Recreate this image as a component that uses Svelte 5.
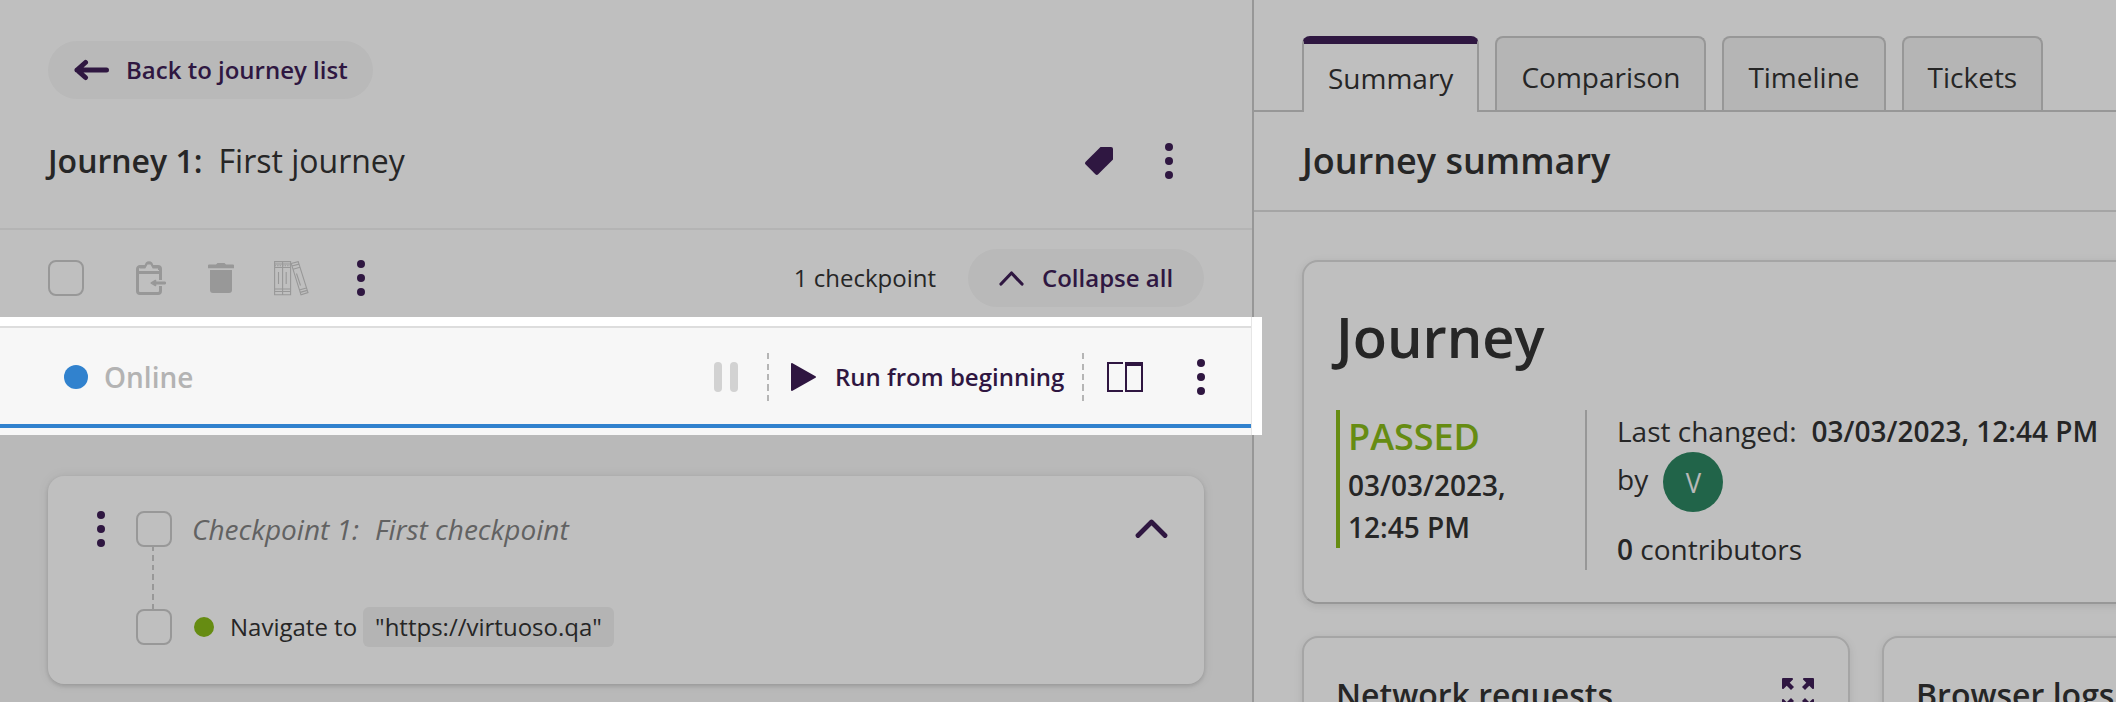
<script>
  const tabs = ['Summary', 'Comparison', 'Timeline', 'Tickets'];
  let active = $state('Summary');
</script>

{#snippet dots()}
  <svg class="dots" width="8" height="36" viewBox="0 0 8 36" fill="currentColor">
    <circle cx="4" cy="4" r="4" /><circle cx="4" cy="18" r="4" /><circle cx="4" cy="32" r="4" />
  </svg>
{/snippet}

<div class="page">
  <section class="left">
    <header class="head">
      <button class="pill back">
        <svg width="36" height="22" viewBox="0 0 36 22" fill="none" stroke="currentColor" stroke-width="5" stroke-linecap="round" stroke-linejoin="round">
          <path d="M12.500 3.500 4 11l8.500 7.500M4 11h29.500" />
        </svg>
        <span>Back to journey list</span>
      </button>
      <div class="title">
        <strong>Journey 1:</strong><span class="name">First journey</span>
        <svg class="tag" width="28" height="28" viewBox="0 0 28 28" fill="currentColor">
          <path d="M15.500 0H26a2 2 0 0 1 2 2v10.500L13.200 27.300a2 2 0 0 1-2.800 0L.7 17.600a2 2 0 0 1 0-2.800z" />
        </svg>
        {@render dots()}
      </div>
    </header>

    <div class="tools">
      <i class="check"></i>
      <svg class="clip" width="30" height="34" viewBox="0 0 30 34">
        <path d="M24.500 19V8A2.500 2.500 0 0 0 22 5.500H4A2.500 2.500 0 0 0 1.500 8v22A2.500 2.500 0 0 0 4 32.500h18a2.500 2.500 0 0 0 2.500-2.500v-5" fill="none" stroke="currentColor" stroke-width="3" />
        <path d="M2 11.500h22.500" stroke="currentColor" stroke-width="3" />
        <path d="M4 9V5.500h4.500C8.700 2 10.500.3 13 .3S17.300 2 17.500 5.500H23V9z" fill="currentColor" />
        <path d="M4 9.700V7.500h5.300l2.200-4h3l2.200 4h5.300v2.200z" fill="#fff" />
        <path d="M28.700 22H19" stroke="currentColor" stroke-width="2.800" stroke-linecap="round" />
        <path d="M19.500 19.500 15.300 22l4.200 2.500z" fill="currentColor" stroke="currentColor" stroke-width="1.600" stroke-linejoin="round" />
      </svg>
      <svg class="trash" width="26" height="30" viewBox="0 0 26 30" fill="currentColor">
        <path d="M1 1.500H8L9.500 0h7L18 1.500h7a1 1 0 0 1 1 1V5.300H0V2.500a1 1 0 0 1 1-1zM2 7h22v20a3 3 0 0 1-3 3H5a3 3 0 0 1-3-3z" />
      </svg>
      <svg class="books" width="35" height="35" viewBox="0 0 35 35" fill="none" stroke="currentColor" stroke-width="1.100">
        <path d="M.6.600h8v33.200h-8zM8.600.600h8v33.200h-8zM.6 3h16M.6 6.500h16M.6 28h16M.6 30.500h16M4.500 11v12M12.200 11v12" />
        <path d="M.6 4.800h16" stroke-dasharray="1.500 1" />
        <path d="m17.200 2.500 7-1.900 9.800 31-7 2.200zM17.900 5l7.100-1.900M19 8.200l7-2M25.300 29l7-2M26.200 31.400l7-2M22.500 12.500l4 12" />
      </svg>
      <span class="ink">{@render dots()}</span>
      <span class="count">1 checkpoint</span>
      <button class="pill collapse">
        <svg width="25" height="15" viewBox="0 0 25 15" fill="none" stroke="currentColor" stroke-width="3.200" stroke-linecap="round" stroke-linejoin="round"><path d="M2 13 12.500 2 23 13" /></svg>
        <span>Collapse all</span>
      </button>
    </div>

    <div class="debug">
      <i class="online"></i><span class="state">Online</span>
      <svg class="pause" width="24" height="30" viewBox="0 0 24 30" fill="currentColor"><rect width="8" height="30" rx="4" /><rect x="16" width="8" height="30" rx="4" /></svg>
      <i class="dash d1"></i>
      <svg class="play" width="25" height="28" viewBox="0 0 25 28" fill="currentColor" stroke="currentColor" stroke-width="2" stroke-linejoin="round"><path d="M1 1v26L24 14z" /></svg>
      <span class="run">Run from beginning</span>
      <i class="dash d2"></i>
      <svg class="cols" width="36" height="30" viewBox="0 0 36 30" fill="none" stroke="currentColor" stroke-width="2"><path d="M16 1H1v28h15M19 2h16v27H19z" /><path d="M18 2h18" stroke-width="4" /></svg>
      {@render dots()}
    </div>

    <div class="list">
      <article class="checkpoint">
        <div class="crow">
          {@render dots()}
          <i class="check"></i>
          <em>Checkpoint 1:</em><em class="cname">First checkpoint</em>
          <svg class="chev" width="33" height="20" viewBox="0 0 33 20" fill="none" stroke="currentColor" stroke-width="4.800" stroke-linecap="round" stroke-linejoin="round"><path d="M3 16.500 16.500 3 30 16.500" /></svg>
        </div>
        <i class="link"></i>
        <div class="step">
          <i class="check"></i><i class="ok"></i><span class="nav">Navigate to</span><code>"https://virtuoso.qa"</code>
        </div>
      </article>
    </div>
  </section>

  <section class="right">
    <nav>
      {#each tabs as tab}
        <button class="tab" class:active={tab === active} onclick={() => (active = tab)}>{tab}</button>
      {/each}
    </nav>
    <h2>Journey summary</h2>
    <div class="cards">
      <article class="card main">
        <h1>Journey</h1>
        <div class="info">
          <div class="result"><b class="passed">PASSED</b><b>03/03/2023,</b><b>12:45 PM</b></div>
          <div class="meta">
            <div class="line">Last changed:<b class="when">03/03/2023, 12:44 PM</b></div>
            <div class="by">by<span class="avatar"><span>V</span></span></div>
            <div class="line"><b>0</b>&nbsp;contributors</div>
          </div>
        </div>
      </article>
      <div class="pair">
        <article class="card small">
          <h3>Network requests</h3>
          <svg width="32" height="32" viewBox="0 0 32 32" fill="currentColor" stroke="currentColor" stroke-linejoin="round">
            <g id="corner"><path d="M1 1h9L1 10z" stroke-width="2" /><path d="m4 4 6.500 6.500" stroke-width="4.200" /></g>
            <use href="#corner" transform="matrix(-1 0 0 1 32 0)" />
            <use href="#corner" transform="matrix(1 0 0 -1 0 32)" />
            <use href="#corner" transform="matrix(-1 0 0 -1 32 32)" />
          </svg>
        </article>
        <article class="card small"><h3>Browser logs</h3></article>
      </div>
    </div>
  </section>
  <div class="spotlight"></div>
</div>

<style>
  :global(body) { overflow: hidden; }
  .page { position: relative; display: flex; width: 2116px; height: 702px; overflow: hidden; background: #fff; color: #333; font: 400 28px/42px "Open Sans", sans-serif; white-space: nowrap; }
  .page * { box-sizing: border-box; }
  svg, i { display: block; flex: none; }
  button { font: inherit; color: inherit; padding: 0; border: 0; background: none; }
  strong, b { font-weight: 600; }
  .left { width: 1254px; flex: none; display: flex; flex-direction: column; border-right: 2px solid #cacaca; }
  .head, .tools, .debug { flex: none; }
  .head { height: 230px; padding: 41px 79px 0 48px; border-bottom: 2px solid #f1f1f1; }
  .pill { display: flex; align-items: center; height: 58px; border-radius: 29px; background: #f7f7f7; color: #3f1f57; font-size: 24px; font-weight: 600; }
  .back { width: 325px; padding-left: 25px; gap: 17px; }
  .title { display: flex; align-items: center; height: 64px; margin-top: 30px; font-size: 32px; }
  .name { margin-left: 16px; }
  .title .tag { margin-left: auto; margin-right: 52px; color: #3f1f57; }
  .title .dots { color: #3f1f57; }
  .tools { display: flex; align-items: center; height: 96px; padding: 0 48px; font-size: 24px; color: #cbcbcb; }
  .check { width: 36px; height: 36px; border: 2px solid #cbcbcb; border-radius: 8px; }
  .clip { margin-left: 52px; }
  .trash { margin-left: 42px; }
  .books { margin-left: 40px; }
  .ink { color: #3f1f57; margin-left: 48px; }
  .count { color: #333; margin-left: auto; margin-right: 32px; }
  .collapse { width: 236px; padding-left: 31px; gap: 18px; }
  .debug { display: flex; align-items: center; height: 102px; padding: 2px 47px 0 64px; border-top: 2px solid #ddd; border-bottom: 4px solid #3182ce; background: #f7f7f7; color: #2f1641; }
  .online { width: 24px; height: 24px; border-radius: 50%; background: #3182ce; }
  .state { margin-left: 16px; color: #b3b3b3; font-weight: 600; }
  .pause { margin-left: auto; color: #d2d2d2; }
  .dash { width: 2px; height: 48px; background: repeating-linear-gradient(#b5b5b5 0 6px, transparent 6px 10.5px); }
  .d1 { margin: 0 22px 0 29px; }
  .run { width: 229px; margin-left: 19px; font-size: 24px; font-weight: 600; }
  .d2 { margin: 0 23px 0 18px; }
  .debug .dots { margin-left: 54px; }
  .list { flex: 1; min-height: 0; padding: 48px; background: #f7f7f7; }
  .checkpoint { height: 208px; padding: 35px 36px 0 49px; border-radius: 16px; background: #fff; box-shadow: 0 2px 4px rgba(0,0,0,.14), 0 0 12px rgba(0,0,0,.08); }
  .crow, .step { display: flex; align-items: center; height: 36px; }
  .crow .dots, .chev { color: #3f1f57; }
  .crow .check { margin-left: 31px; }
  em { margin-left: 20px; color: #838383; }
  .cname { margin-left: 16px; }
  .chev { margin-left: auto; }
  .link { width: 2px; height: 62px; margin-left: 55px; background: repeating-linear-gradient(#cbcbcb 0 4px, transparent 4px 8px, #cbcbcb 8px 9.700px); }
  .step { padding-left: 39px; font-size: 24px; }
  .ok { width: 20px; height: 20px; margin-left: 22px; border-radius: 50%; background: #88bb18; }
  .nav { margin-left: 16px; }
  code { height: 40px; margin-left: 6px; padding: 0 12px; border-radius: 6px; background: #f1f1f1; font: 400 24px/40px "Open Sans", sans-serif; }
  .right { flex: 1; min-width: 0; }
  nav { display: flex; gap: 16px; height: 112px; padding: 36px 0 0 48px; background: linear-gradient(#cacaca, #cacaca) left bottom / 100% 2px no-repeat; }
  .tab { height: 74px; padding: 6px 24px 0; border: 2px solid #cacaca; border-bottom: 0; border-radius: 8px 8px 0 0; background: #f2f2f2; }
  .active { height: 76px; padding-top: 0; border-top: 8px solid #3f1f57; background: #fff; }
  h1, h2, h3 { margin: 0; font-weight: 600; }
  h2 { height: 100px; padding-left: 48px; border-bottom: 2px solid #dcdcdc; font-size: 36px; line-height: 98px; }
  .cards { padding: 48px 0 0 48px; }
  .card { border: 2px solid #dcdcdc; border-radius: 16px; box-shadow: 0 2px 8px rgba(0,0,0,.1); background: #fff; }
  .main { width: 1128px; height: 344px; padding: 44px 32px 0; border-bottom-color: #cacaca; }
  h1 { height: 104px; font-size: 56px; line-height: 60px; }
  .info { display: flex; }
  .result { width: 249px; height: 138px; padding: 6px 0 0 8px; border-left: 4px solid #88bb18; }
  .result b { display: block; }
  .result .passed { color: #88bb18; font-size: 36px; line-height: 42px; font-weight: 600; margin-bottom: 6px; }
  .meta { height: 160px; padding-left: 30px; border-left: 2px solid #cacaca; }
  .line { display: flex; }
  .when { margin-left: 15px; }
  .by { display: flex; align-items: flex-start; height: 60px; margin-bottom: 16px; line-height: 54px; }
  .avatar { display: flex; justify-content: center; width: 60px; height: 60px; margin-left: 15px; border-radius: 50%; background: #2d8662; color: #f7f7f7; line-height: 60px; }
  .avatar span { transform: scaleX(.92); }
  .pair { display: flex; gap: 32px; margin-top: 32px; }
  .small { display: flex; justify-content: space-between; width: 548px; height: 300px; flex: none; padding: 40px 34px 0 32px; color: #3f1f57; }
  h3 { color: #333; font-size: 32px; line-height: 34px; }
  .spotlight { position: absolute; left: 0; top: 317px; width: 1262px; height: 118px; box-shadow: 0 0 0 2200px rgba(0,0,0,.25); pointer-events: none; }
  .spotlight::after { content: ""; position: absolute; right: 0; top: 0; width: 10px; height: 118px; border-left: 1px solid #e6e6e6; background: #fff; }
</style>
